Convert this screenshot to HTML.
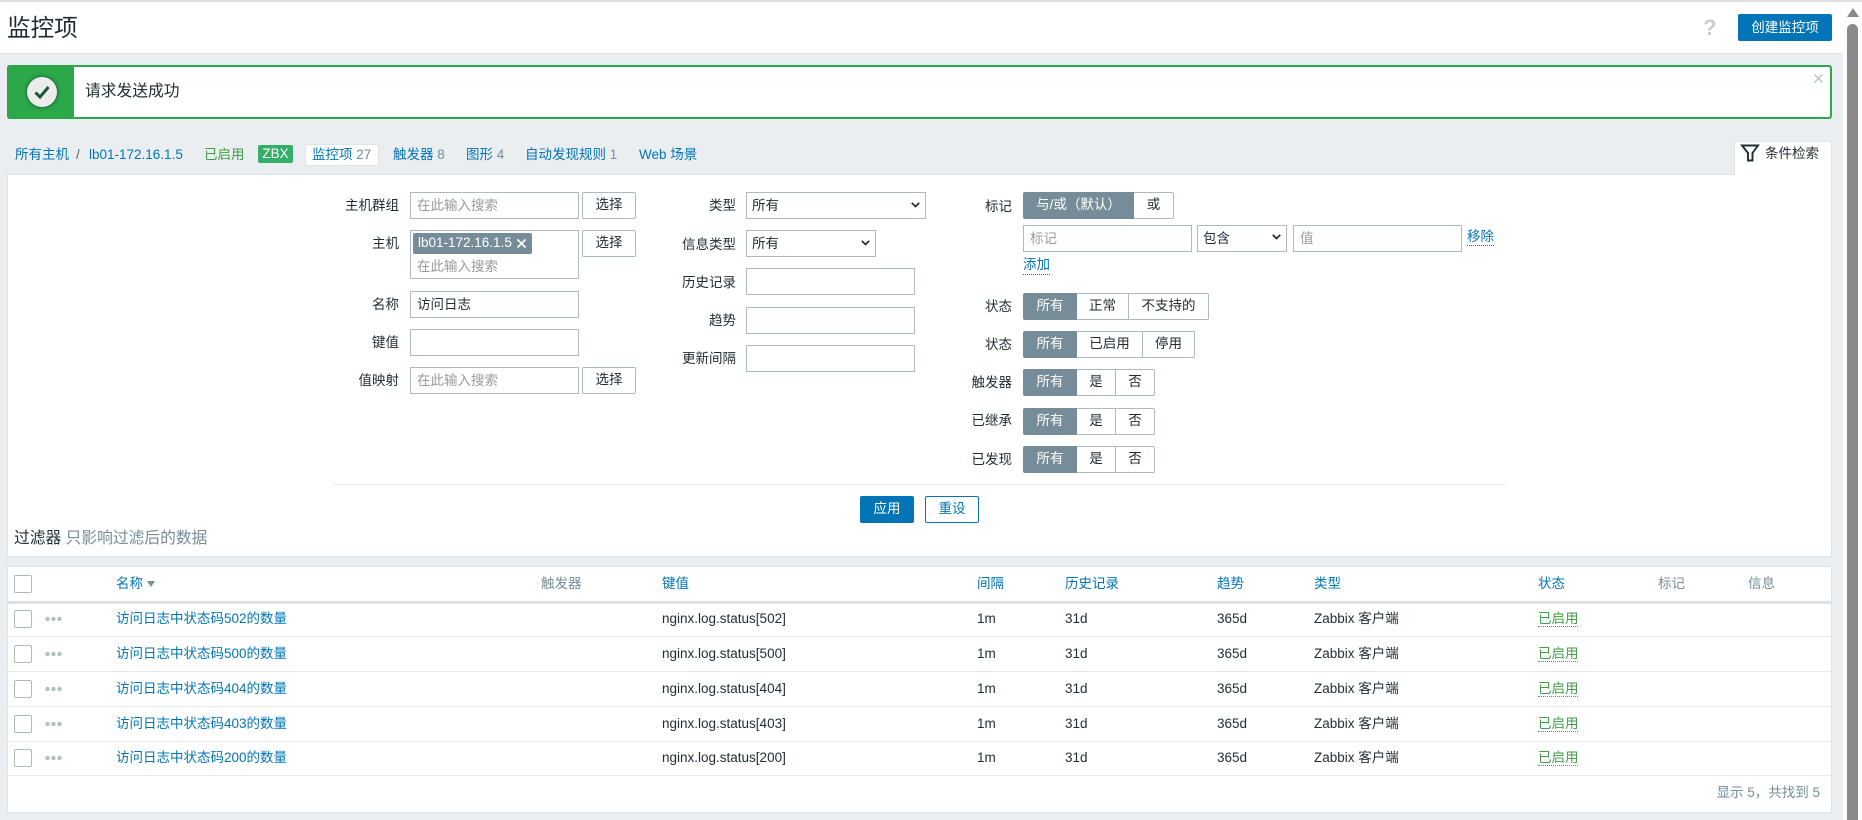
<!DOCTYPE html>
<html lang="zh"><head><meta charset="utf-8"><title>监控项</title>
<style>
html,body{margin:0;padding:0;width:1862px;height:820px;overflow:hidden;background:#ebeef0}
body{position:relative;font:13.5px/20px "Liberation Sans","Noto Sans CJK SC",sans-serif;color:#1f2c33}
div,span.t,a{position:absolute;white-space:nowrap;box-sizing:border-box}
a{color:#0275b8;text-decoration:none}
.g{color:#768d99}
.l{text-align:right;height:20px;margin-top:1px}
.i{border:1px solid #acbbc2;background:#fff;height:27px;line-height:26px;padding-left:6px}
.p{color:#9a9a9a}
.b{border:1px solid #acbbc2;background:#fff;height:27px;line-height:24px;text-align:center;border-radius:2px}
.s{background:#768d99;color:#fff;border-color:#768d99}
.c{width:18px;height:18px;border:1px solid #acbbc2;border-radius:2px;left:14px;background:#fff}
.hl{left:7px;width:1824px;height:1px;background:#e6eaed}
.st{color:#429e47;left:1538px;height:20px}
.u{height:0;border-bottom:1px dotted}
svg{position:absolute;overflow:visible}
</style></head><body>
<div style="left:0;top:0;width:1843px;height:54px;background:#fff;border-bottom:1px solid #dfe4e7"></div>
<div style="left:0;top:0;width:1862px;height:2px;background:#e0e0e0"></div>
<div style="left:1843px;top:2px;width:19px;height:818px;background:#fdfdfd"></div>
<svg style="left:1847px;top:8px" width="12" height="9"><path d="M6 0L12 9H0Z" fill="#8a8a8a"/></svg>
<div style="left:1847px;top:24px;width:11px;height:796px;background:#8a8a8a;border-radius:6px 6px 0 0"></div>

<div style="left:7px;top:14px;font-size:23.6px;line-height:30px">监控项</div>
<div style="left:1699px;top:13px;width:22px;text-align:center;font-size:22px;line-height:30px;font-weight:bold;color:#c6ced4">?</div>
<div class="b" style="left:1738px;top:14px;width:94px;background:#0275b8;border:0;color:#fff;line-height:27px">创建监控项</div>

<div style="left:7px;top:65px;width:1825px;height:54px;border:2px solid #2ca84a;border-radius:3px;background:#fff"></div>
<div style="left:7px;top:65px;width:67px;height:54px;background:#2ca84a;border-radius:3px 0 0 3px"></div>
<div style="left:27px;top:77px;width:30px;height:30px;border-radius:50%;background:#ececec;box-shadow:0 0 3px 1px #1c6b35"></div>
<svg style="left:0;top:0" width="80" height="120"><path d="M35.5 92.5L40 97L48.5 87" fill="none" stroke="#1d5a35" stroke-width="3"/></svg>
<div style="left:85px;top:82px;font-size:15.75px;line-height:20px">请求发送成功</div>
<svg style="left:1814px;top:74px" width="9" height="9"><path d="M0.5 0.5L8.5 8.5M8.5 0.5L0.5 8.5" stroke="#b6c2ca" stroke-width="1.4"/></svg>

<a style="left:15px;top:145px">所有主机</a>
<div class="g" style="left:76px;top:145px;color:#5a6a73">/</div>
<a style="left:89px;top:145px">lb01-172.16.1.5</a>
<div style="left:204px;top:145px;color:#429e47">已启用</div>
<div style="left:258px;top:145px;width:35px;height:18px;background:#34af67;color:#fff;text-align:center;line-height:17px;border-radius:2px">ZBX</div>
<div style="left:305px;top:144px;width:74px;height:22px;background:#fff;border:1px solid #dfe4e7;border-radius:2px"></div>
<a style="left:312px;top:145px">监控项 <span class="g">27</span></a>
<a style="left:393px;top:145px">触发器 <span class="g">8</span></a>
<a style="left:466px;top:145px">图形 <span class="g">4</span></a>
<a style="left:525px;top:145px">自动发现规则 <span class="g">1</span></a>
<a style="left:639px;top:145px">Web 场景</a>

<div style="left:7px;top:174px;width:1825px;height:383px;background:#fff;border:1px solid #dfe4e7"></div>
<div style="left:1734px;top:141px;width:98px;height:35px;background:#fff;border:1px solid #dfe4e7;border-bottom:0;border-radius:2px 2px 0 0"></div>
<svg style="left:1740px;top:144px" width="20" height="18"><path d="M2 1.5H18L12.5 9V16.5H8V9Z" fill="none" stroke="#1f2c33" stroke-width="1.9"/></svg>
<div style="left:1765px;top:144px">条件检索</div>

<div class="l" style="left:300px;width:99px;top:195px">主机群组</div>
<div class="i p" style="left:410px;top:192px;width:169px">在此输入搜索</div>
<div class="b" style="left:582px;top:192px;width:54px">选择</div>
<div class="l" style="left:300px;width:99px;top:233px">主机</div>
<div class="i" style="left:410px;top:230px;width:169px;height:49px"></div>
<div style="left:413px;top:233px;width:119px;height:21px;background:#768d99;color:#fff;border-radius:2px;padding-left:5px;line-height:20px">lb01-172.16.1.5</div>
<svg style="left:517px;top:239px" width="9" height="9"><path d="M0.5 0.5L8.5 8.5M8.5 0.5L0.5 8.5" stroke="#fff" stroke-width="1.7"/></svg>
<div class="p" style="left:417px;top:257px">在此输入搜索</div>
<div class="b" style="left:582px;top:230px;width:54px">选择</div>
<div class="l" style="left:300px;width:99px;top:294px">名称</div>
<div class="i" style="left:410px;top:291px;width:169px">访问日志</div>
<div class="l" style="left:300px;width:99px;top:332px">键值</div>
<div class="i" style="left:410px;top:329px;width:169px"></div>
<div class="l" style="left:300px;width:99px;top:370px">值映射</div>
<div class="i p" style="left:410px;top:367px;width:169px">在此输入搜索</div>
<div class="b" style="left:582px;top:367px;width:54px">选择</div>

<div class="l" style="left:640px;width:96px;top:195px">类型</div>
<div class="i" style="left:746px;top:192px;width:180px;padding-left:5px">所有</div>
<svg style="left:911px;top:202px" width="9" height="6"><path d="M0.8 0.8L4.5 4.5L8.2 0.8" fill="none" stroke="#1f2c33" stroke-width="1.7"/></svg>
<div class="l" style="left:640px;width:96px;top:234px">信息类型</div>
<div class="i" style="left:746px;top:230px;width:130px;padding-left:5px">所有</div>
<svg style="left:861px;top:240px" width="9" height="6"><path d="M0.8 0.8L4.5 4.5L8.2 0.8" fill="none" stroke="#1f2c33" stroke-width="1.7"/></svg>
<div class="l" style="left:640px;width:96px;top:272px">历史记录</div>
<div class="i" style="left:746px;top:268px;width:169px"></div>
<div class="l" style="left:640px;width:96px;top:310px">趋势</div>
<div class="i" style="left:746px;top:307px;width:169px"></div>
<div class="l" style="left:640px;width:96px;top:348px">更新间隔</div>
<div class="i" style="left:746px;top:345px;width:169px"></div>

<div class="l" style="left:950px;width:62px;top:196px">标记</div>
<div class="b s" style="left:1023px;top:192px;width:111px;border-radius:2px 0 0 2px">与/或（默认）</div>
<div class="b" style="left:1134px;top:192px;width:40px;border-left:0;border-radius:0 2px 2px 0">或</div>
<div class="i p" style="left:1023px;top:225px;width:169px">标记</div>
<div class="i" style="left:1197px;top:225px;width:90px;padding-left:5px">包含</div>
<svg style="left:1272px;top:234px" width="9" height="6"><path d="M0.8 0.8L4.5 4.5L8.2 0.8" fill="none" stroke="#1f2c33" stroke-width="1.7"/></svg>
<div class="i p" style="left:1293px;top:225px;width:169px">值</div>
<a style="left:1467px;top:227px">移除</a>
<div class="u" style="left:1467px;top:245px;width:27px;color:#0275b8"></div>
<a style="left:1023px;top:255px">添加</a>
<div class="u" style="left:1023px;top:274px;width:27px;color:#0275b8"></div>

<div class="l" style="left:950px;width:62px;top:296px">状态</div>
<div class="b s" style="left:1023px;top:293px;width:54px;border-radius:2px 0 0 2px">所有</div>
<div class="b" style="left:1077px;top:293px;width:52px;border-left:0;border-radius:0">正常</div>
<div class="b" style="left:1128px;top:293px;width:81px;border-radius:0 2px 2px 0">不支持的</div>

<div class="l" style="left:950px;width:62px;top:334px">状态</div>
<div class="b s" style="left:1023px;top:331px;width:54px;border-radius:2px 0 0 2px">所有</div>
<div class="b" style="left:1077px;top:331px;width:66px;border-left:0;border-radius:0">已启用</div>
<div class="b" style="left:1142px;top:331px;width:53px;border-radius:0 2px 2px 0">停用</div>

<div class="l" style="left:950px;width:62px;top:372px">触发器</div>
<div class="b s" style="left:1023px;top:369px;width:54px;border-radius:2px 0 0 2px">所有</div>
<div class="b" style="left:1077px;top:369px;width:39px;border-left:0;border-radius:0">是</div>
<div class="b" style="left:1115px;top:369px;width:40px;border-radius:0 2px 2px 0">否</div>

<div class="l" style="left:950px;width:62px;top:410px">已继承</div>
<div class="b s" style="left:1023px;top:408px;width:54px;border-radius:2px 0 0 2px">所有</div>
<div class="b" style="left:1077px;top:408px;width:39px;border-left:0;border-radius:0">是</div>
<div class="b" style="left:1115px;top:408px;width:40px;border-radius:0 2px 2px 0">否</div>

<div class="l" style="left:950px;width:62px;top:449px">已发现</div>
<div class="b s" style="left:1023px;top:446px;width:54px;border-radius:2px 0 0 2px">所有</div>
<div class="b" style="left:1077px;top:446px;width:39px;border-left:0;border-radius:0">是</div>
<div class="b" style="left:1115px;top:446px;width:40px;border-radius:0 2px 2px 0">否</div>

<div style="left:334px;top:484px;width:1171px;height:1px;background:#e6eaed"></div>
<div class="b" style="left:860px;top:496px;width:54px;background:#0275b8;border-color:#0275b8;color:#fff">应用</div>
<div class="b" style="left:925px;top:496px;width:54px;border-color:#0275b8;color:#0275b8">重设</div>
<div style="left:14px;top:529px;font-size:15.75px">过滤器 <span class="g">只影响过滤后的数据</span></div>

<div style="left:7px;top:566px;width:1825px;height:247px;background:#fff;border:1px solid #dfe4e7"></div>
<div class="c" style="top:575px"></div>
<a style="left:116px;top:574px">名称</a>
<svg style="left:147px;top:581px" width="8" height="6"><path d="M0 0H8L4 6Z" fill="#768d99"/></svg>
<div class="g" style="left:541px;top:574px">触发器</div>
<a style="left:662px;top:574px">键值</a>
<a style="left:977px;top:574px">间隔</a>
<a style="left:1065px;top:574px">历史记录</a>
<a style="left:1217px;top:574px">趋势</a>
<a style="left:1314px;top:574px">类型</a>
<a style="left:1538px;top:574px">状态</a>
<div class="g" style="left:1658px;top:574px">标记</div>
<div class="g" style="left:1748px;top:574px">信息</div>
<div style="left:8px;top:601px;width:1823px;height:3px;background:#dde2e6"></div>

<div class="hl" style="top:636px"></div>
<div class="hl" style="top:671px"></div>
<div class="hl" style="top:706px"></div>
<div class="hl" style="top:741px"></div>
<div class="hl" style="top:775px"></div>

<div class="c" style="top:610px"></div>
<svg style="left:45px;top:616px" width="17" height="6" fill="#b4bfc5"><circle cx="2.5" cy="3" r="2.2"/><circle cx="8.5" cy="3" r="2.2"/><circle cx="14.5" cy="3" r="2.2"/></svg>
<a style="left:116px;top:609px">访问日志中状态码502的数量</a>
<div style="left:662px;top:609px">nginx.log.status[502]</div>
<div style="left:977px;top:609px">1m</div><div style="left:1065px;top:609px">31d</div><div style="left:1217px;top:609px">365d</div><div style="left:1314px;top:609px">Zabbix 客户端</div>
<div class="st" style="top:609px">已启用</div><div class="u" style="left:1538px;top:626px;width:40px;color:#429e47"></div>

<div class="c" style="top:645px"></div>
<svg style="left:45px;top:651px" width="17" height="6" fill="#b4bfc5"><circle cx="2.5" cy="3" r="2.2"/><circle cx="8.5" cy="3" r="2.2"/><circle cx="14.5" cy="3" r="2.2"/></svg>
<a style="left:116px;top:644px">访问日志中状态码500的数量</a>
<div style="left:662px;top:644px">nginx.log.status[500]</div>
<div style="left:977px;top:644px">1m</div><div style="left:1065px;top:644px">31d</div><div style="left:1217px;top:644px">365d</div><div style="left:1314px;top:644px">Zabbix 客户端</div>
<div class="st" style="top:644px">已启用</div><div class="u" style="left:1538px;top:661px;width:40px;color:#429e47"></div>

<div class="c" style="top:680px"></div>
<svg style="left:45px;top:686px" width="17" height="6" fill="#b4bfc5"><circle cx="2.5" cy="3" r="2.2"/><circle cx="8.5" cy="3" r="2.2"/><circle cx="14.5" cy="3" r="2.2"/></svg>
<a style="left:116px;top:679px">访问日志中状态码404的数量</a>
<div style="left:662px;top:679px">nginx.log.status[404]</div>
<div style="left:977px;top:679px">1m</div><div style="left:1065px;top:679px">31d</div><div style="left:1217px;top:679px">365d</div><div style="left:1314px;top:679px">Zabbix 客户端</div>
<div class="st" style="top:679px">已启用</div><div class="u" style="left:1538px;top:696px;width:40px;color:#429e47"></div>

<div class="c" style="top:715px"></div>
<svg style="left:45px;top:721px" width="17" height="6" fill="#b4bfc5"><circle cx="2.5" cy="3" r="2.2"/><circle cx="8.5" cy="3" r="2.2"/><circle cx="14.5" cy="3" r="2.2"/></svg>
<a style="left:116px;top:714px">访问日志中状态码403的数量</a>
<div style="left:662px;top:714px">nginx.log.status[403]</div>
<div style="left:977px;top:714px">1m</div><div style="left:1065px;top:714px">31d</div><div style="left:1217px;top:714px">365d</div><div style="left:1314px;top:714px">Zabbix 客户端</div>
<div class="st" style="top:714px">已启用</div><div class="u" style="left:1538px;top:731px;width:40px;color:#429e47"></div>

<div class="c" style="top:749px"></div>
<svg style="left:45px;top:755px" width="17" height="6" fill="#b4bfc5"><circle cx="2.5" cy="3" r="2.2"/><circle cx="8.5" cy="3" r="2.2"/><circle cx="14.5" cy="3" r="2.2"/></svg>
<a style="left:116px;top:748px">访问日志中状态码200的数量</a>
<div style="left:662px;top:748px">nginx.log.status[200]</div>
<div style="left:977px;top:748px">1m</div><div style="left:1065px;top:748px">31d</div><div style="left:1217px;top:748px">365d</div><div style="left:1314px;top:748px">Zabbix 客户端</div>
<div class="st" style="top:748px">已启用</div><div class="u" style="left:1538px;top:765px;width:40px;color:#429e47"></div>

<div class="g" style="left:1600px;width:220px;text-align:right;top:783px">显示 5，共找到 5</div>
</body></html>
